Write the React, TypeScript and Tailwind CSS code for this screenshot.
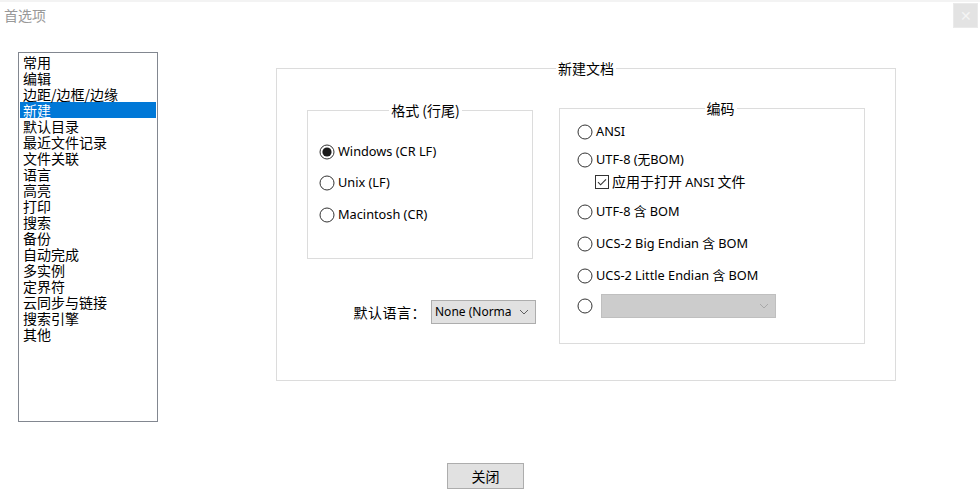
import React from "react";

const cjk = { fontFamily: '"Noto Sans CJK SC", "Noto Sans", sans-serif' };
const lat = { fontFamily: '"Noto Sans", "Noto Sans CJK SC", sans-serif' };

function Radio({ checked }: { checked?: boolean }) {
  return (
    <svg width="16" height="16" viewBox="0 0 16 16" className="shrink-0">
      <circle cx="8" cy="8" r="7" fill="white" stroke="#333" strokeWidth="1" />
      {checked && <circle cx="8" cy="8" r="4.6" fill="#1a1a1a" />}
    </svg>
  );
}

function Check() {
  return (
    <svg width="14" height="14" viewBox="0 0 14 14" className="shrink-0">
      <rect x="0.5" y="0.5" width="13" height="13" fill="white" stroke="#333" />
      <path d="M3 7.2 L5.6 9.8 L11 4.3" fill="none" stroke="#333" strokeWidth="1.1" />
    </svg>
  );
}

function Chevron({ color = "#606060" }: { color?: string }) {
  return (
    <svg width="10" height="6" viewBox="0 0 10 6" className="shrink-0">
      <path d="M1 1 L5 5 L9 1" fill="none" stroke={color} strokeWidth="1" />
    </svg>
  );
}

function RadioRow({ label, checked, className = "" }: { label: string; checked?: boolean; className?: string }) {
  return (
    <div className={"flex items-center h-[20px] gap-[3px] text-[12.75px] text-black " + className} style={lat}>
      <Radio checked={checked} />
      <span>{label}</span>
    </div>
  );
}

const items = [
  "常用",
  "编辑",
  "边距/边框/边缘",
  "新建",
  "默认目录",
  "最近文件记录",
  "文件关联",
  "语言",
  "高亮",
  "打印",
  "搜索",
  "备份",
  "自动完成",
  "多实例",
  "定界符",
  "云同步与链接",
  "搜索引擎",
  "其他",
];

export default function App() {
  return (
    <div className="w-[980px] h-[502px] bg-white flex flex-col overflow-hidden border-t-2 border-[#f3f3f3]">
      {/* title bar */}
      <div className="h-[30px] flex items-start justify-between">
        <div className="pl-[4px] pt-[3px] text-[14px] leading-[20px] text-[#999999]" style={cjk}>
          首选项
        </div>
        <div className="mt-[1px] mr-[2px] w-[25px] h-[25px] bg-[#e3e3e3] border border-[#eaeaea] flex items-center justify-center text-[#f4f4f4] text-[14px]">
          ✕
        </div>
      </div>

      {/* main */}
      <div className="flex items-start pt-[20px]">
        {/* list */}
        <div className="ml-[18px] w-[140px] h-[370px] border border-[#828790] pt-[1px] px-[1px]" style={cjk}>
          {items.map((it) => (
            <div
              key={it}
              className={
                "h-[16px] leading-[16px] text-[14px] pl-[3px] " +
                (it === "新建" ? "bg-[#0078d7] text-white" : "text-black")
              }
            >
              {it}
            </div>
          ))}
        </div>

        {/* outer group */}
        <fieldset className="ml-[118px] mt-[5px] w-[620px] h-[324px] border border-[#dcdcdc] px-[30px]">
          <legend className="mx-auto px-[2px] text-[14px] leading-[22px] text-black" style={cjk}>
            新建文档
          </legend>
          <div className="flex items-start gap-[26px]">
            <div className="flex flex-col items-end">
              <fieldset className="mt-[21px] w-[226px] h-[159px] border border-[#dcdcdc] pl-[11px]">
                <legend className="mx-auto px-[2px] text-[14px] leading-[20px] text-black" style={cjk}>
                  格式 (行尾)
                </legend>
                <div className="flex flex-col pt-[22px] gap-[11px]">
                  <RadioRow label="Windows (CR LF)" checked />
                  <RadioRow label="Unix (LF)" />
                  <RadioRow label="Macintosh (CR)" className="mt-[1px]" />
                </div>
              </fieldset>
              <div className="mt-[41px] flex items-center gap-[5px] mr-[-3px]">
                <span className="text-[14px] text-black tracking-[0.5px]" style={cjk}>
                  默认语言：
                </span>
                <div
                  className="w-[105px] h-[24px] bg-[#e1e1e1] border border-[#adadad] flex items-center justify-between pl-[3px] pr-[6px] text-[12px] text-black"
                  style={lat}
                >
                  <span>None (Norma</span>
                  <Chevron />
                </div>
              </div>
            </div>

            <fieldset className="mt-[19px] w-[306px] h-[246px] border border-[#dcdcdc] pl-[17px]">
              <legend className="mx-auto px-[2px] text-[14px] leading-[20px] text-black" style={cjk}>
                编码
              </legend>
              <div className="flex flex-col pt-[4px]">
                <RadioRow label="ANSI" />
                <RadioRow label="UTF-8 (无BOM)" className="mt-[8px]" />
                <div className="flex items-center h-[20px] gap-[3px] mt-[2px] ml-[18px] text-black">
                  <Check />
                  <span className="text-[14px]" style={cjk}>
                    应用于打开 <span className="text-[12.75px]" style={lat}>ANSI</span> 文件
                  </span>
                </div>
                <RadioRow label="UTF-8 含 BOM" className="mt-[10px]" />
                <RadioRow label="UCS-2 Big Endian 含 BOM" className="mt-[12px]" />
                <RadioRow label="UCS-2 Little Endian 含 BOM" className="mt-[12px]" />
                <div className="flex items-center gap-[8px] mt-[8px]">
                  <Radio />
                  <div className="w-[175px] h-[24px] bg-[#cccccc] border border-[#bfbfbf] flex items-center justify-end pr-[6px]">
                    <Chevron color="#a8a8a8" />
                  </div>
                </div>
              </div>
            </fieldset>
          </div>
        </fieldset>
      </div>

      {/* close button */}
      <div className="mt-[41px] ml-[447px] w-[77px] h-[26px] bg-[#e1e1e1] border border-[#adadad] flex items-center justify-center text-[14px] text-black" style={cjk}>
        关闭
      </div>
    </div>
  );
}
